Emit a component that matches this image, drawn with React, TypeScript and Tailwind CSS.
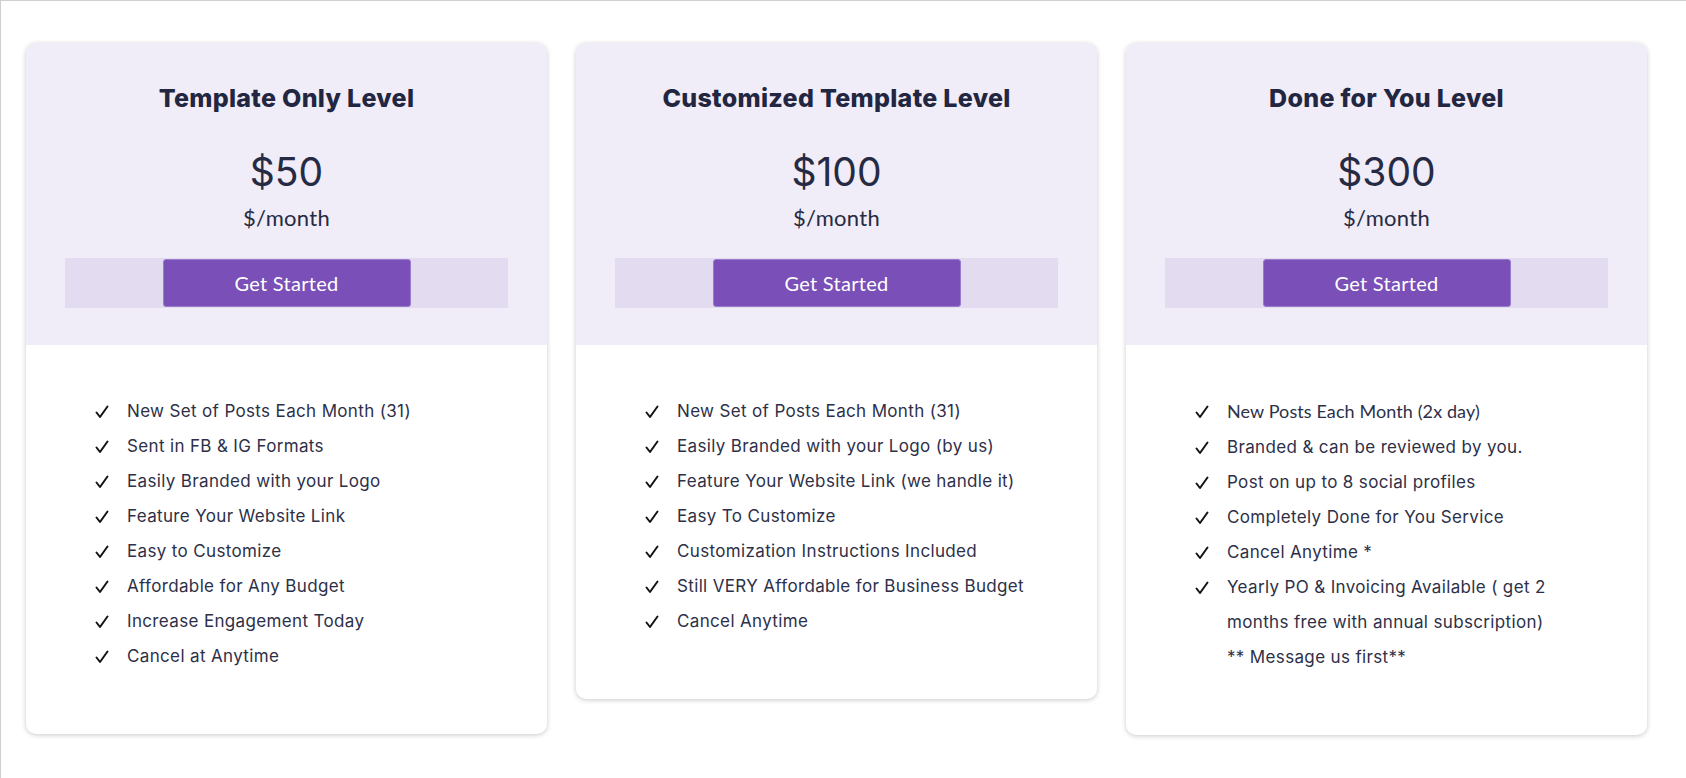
import React from 'react'

interface Plan {
  title: string
  price: string
  features: React.ReactNode[]
}

const plans: Plan[] = [
  {
    title: 'Template Only Level',
    price: '$50',
    features: [
      'New Set of Posts Each Month (31)',
      'Sent in FB & IG Formats',
      'Easily Branded with your Logo',
      'Feature Your Website Link',
      'Easy to Customize',
      'Affordable for Any Budget',
      'Increase Engagement Today',
      'Cancel at Anytime',
    ],
  },
  {
    title: 'Customized Template Level',
    price: '$100',
    features: [
      'New Set of Posts Each Month (31)',
      'Easily Branded with your Logo (by us)',
      'Feature Your Website Link (we handle it)',
      'Easy To Customize',
      'Customization Instructions Included',
      'Still VERY Affordable for Business Budget',
      'Cancel Anytime',
    ],
  },
  {
    title: 'Done for You Level',
    price: '$300',
    features: [
      <span className="font-['Lato',sans-serif] text-[18px] tracking-[0.1px]">New Posts Each Month (2x day)</span>,
      'Branded & can be reviewed by you.',
      'Post on up to 8 social profiles',
      'Completely Done for You Service',
      'Cancel Anytime *',
      <>
        Yearly PO &amp; Invoicing Available ( get 2
        <br />
        months free with annual subscription)
        <br />
        ** Message us first**
      </>,
    ],
  },
]

const Check = () => (
  <svg width="14" height="14" viewBox="0 0 14 14" className="mt-[11px]">
    <path d="M1.5 7.5 L5 12 L12.5 1.5" fill="none" stroke="#141414" strokeWidth="2" strokeLinecap="round" strokeLinejoin="round" />
  </svg>
)

function PlanCard({ plan }: { plan: Plan }) {
  return (
    <div className="w-[521px] shrink-0 overflow-hidden rounded-[10px] bg-white shadow-[0_1px_5px_rgba(0,0,0,0.22)]">
      {/* Header */}
      <div className="flex flex-col items-center bg-[#f0ecf8] pt-[39px] pb-[37px]">
        <h2 className="font-['Inter',sans-serif] text-[25px] font-extrabold leading-[32px] tracking-[0.3px] text-[#222641]">
          {plan.title}
        </h2>
        <div className="mt-[34px] font-['Inter',sans-serif] text-[39px] font-normal leading-[48px] text-[#262a42]">
          {plan.price}
        </div>
        <div className="mt-[8px] font-['Lato',sans-serif] text-[22px] leading-[28px] tracking-[0.3px] text-[#262a42]">
          $/month
        </div>
        <div className="mt-[26px] flex h-[50px] w-[443px] items-center justify-center bg-[#e3dcf0]">
          <button className="h-[48px] w-[248px] rounded-[3px] border border-[#9a7ccc] bg-[#7a4fb7] font-['Lato',sans-serif] text-[20px] tracking-[0.3px] text-white">
            Get Started
          </button>
        </div>
      </div>

      {/* Features */}
      <ul className="px-[69px] pt-[49px] pb-[60px] font-['Inter',sans-serif] text-[17px] leading-[35px] tracking-[0.35px] text-[#2d3048]">
        {plan.features.map((f, i) => (
          <li key={i} className="flex">
            <span className="w-[32px] shrink-0">
              <Check />
            </span>
            <span>{f}</span>
          </li>
        ))}
      </ul>
    </div>
  )
}

export default function App() {
  return (
    <div className="min-h-[778px] border-t border-l border-[#cfcfcf] bg-white">
      <div className="flex items-start gap-[29px] pt-[42px] pl-[25px]">
        {plans.map((p) => (
          <PlanCard key={p.title} plan={p} />
        ))}
      </div>
    </div>
  )
}
